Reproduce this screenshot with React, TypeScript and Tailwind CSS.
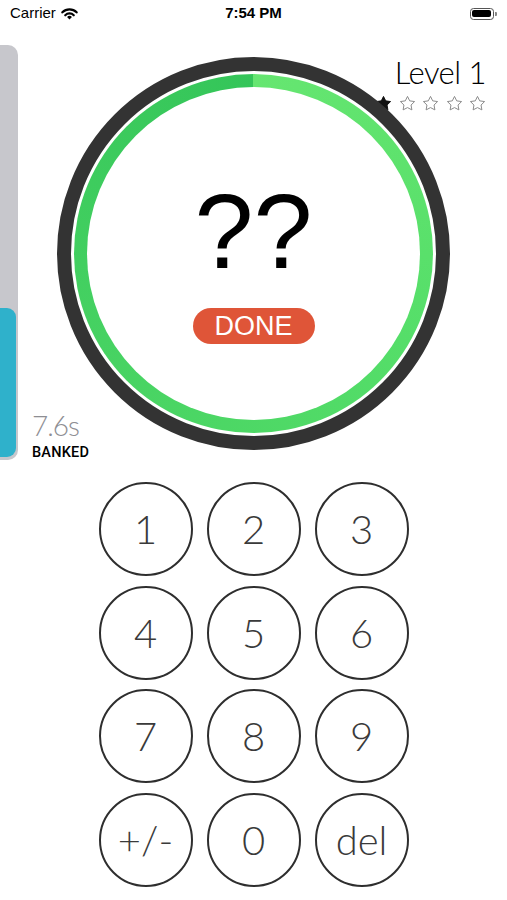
import React from 'react'

const keys = ['1', '2', '3', '4', '5', '6', '7', '8', '9', '+/-', '0', 'del']

function Star({ filled }: { filled?: boolean }) {
  return (
    <svg width="17" height="17" viewBox="0 0 24 24">
      <polygon
        points="12,2 15.09,8.26 22,9.27 17,14.14 18.18,21.02 12,17.77 5.82,21.02 7,14.14 2,9.27 8.91,8.26"
        fill={filled ? '#111' : '#fff'}
        stroke={filled ? '#111' : '#8a8a8a'}
        strokeWidth="1.4"
        strokeLinejoin="round"
      />
    </svg>
  )
}

function Wifi() {
  return (
    <svg width="17" height="13" viewBox="0 0 16 12">
      <path d="M1.3 4.9 A9.4 9.4 0 0 1 14.7 4.9" fill="none" stroke="#000" strokeWidth="2.1" strokeLinecap="round" />
      <path d="M4 7.6 A5.6 5.6 0 0 1 12 7.6" fill="none" stroke="#000" strokeWidth="2.1" strokeLinecap="round" />
      <path d="M8 11.6 L5.7 9.3 A3.2 3.2 0 0 1 10.3 9.3 Z" fill="#000" />
    </svg>
  )
}

export default function App() {
  return (
    <div className="w-[507px] h-[900px] bg-white overflow-hidden font-['Liberation_Sans',sans-serif] text-black">
      {/* status bar */}
      <div className="grid grid-cols-3 h-[27px] items-center px-[10px] text-[15px]">
        <div className="flex items-center gap-[5px]">
          <span>Carrier</span>
          <Wifi />
        </div>
        <div className="text-center font-bold">7:54 PM</div>
        <div className="flex justify-end items-center">
          <div className="w-[24px] h-[12px] rounded-[3.5px] border border-[#555] p-[1.5px]">
            <div className="w-full h-full rounded-[2px] bg-black" />
          </div>
          <div className="w-[2px] h-[4px] rounded-r-[1px] bg-[#888] ml-[1px]" />
        </div>
      </div>

      {/* game area */}
      <div className="relative flex items-start h-[455px]">
        <div className="mt-[18px] w-[18px] h-[415px] rounded-r-[10px] bg-[#c7c7cc] flex flex-col justify-end pr-[2px] pb-[3px]">
          <div className="h-[149px] rounded-r-[9px] bg-[#2fb1cb]" />
        </div>

        {/* level + stars */}
        <div className="absolute right-[21px] top-[30px] flex flex-col items-end">
          <span className="font-['Lato',sans-serif] font-light text-[31px] leading-none tracking-[-0.5px]">Level 1</span>
          <div className="flex gap-[6.5px] mt-[7px]">
            <Star filled />
            <Star />
            <Star />
            <Star />
            <Star />
          </div>
        </div>

        {/* timer ring */}
        <div className="relative z-10 ml-[39px] mt-[30px] w-[393px] h-[393px] rounded-full border-[14px] border-[#333] bg-white p-[3px]">
          <div className="w-full h-full rounded-full bg-[conic-gradient(#66e671,#55de69,#46d262,#34c559)] p-[13px]">
            <div className="w-full h-full rounded-full bg-white flex flex-col items-center pt-[91px]">
              <span className="text-[106px] leading-none">??</span>
              <div className="mt-[24px] w-[122px] h-[36px] rounded-full bg-[#df5538] flex items-center justify-center text-white text-[27px] leading-none">
                DONE
              </div>
            </div>
          </div>
        </div>

        {/* banked time */}
        <div className="absolute left-[32px] top-[384px] flex flex-col">
          <span className="font-['Lato',sans-serif] font-light text-[28px] leading-none text-[#8e8e93] tracking-[-1px]">7.6s</span>
          <span className="font-['Roboto',sans-serif] font-medium text-[14.5px] leading-none mt-[7px] tracking-[0.2px]">BANKED</span>
        </div>
      </div>

      {/* keypad */}
      <div className="grid grid-cols-[repeat(3,94px)] gap-x-[14px] gap-y-[9.5px] justify-center">
        {keys.map((k) => (
          <button
            key={k}
            className="w-[94px] h-[94px] rounded-full border-2 border-[#2e2e2e] flex items-center justify-center font-['Lato',sans-serif] font-light text-[40px] leading-none text-[#3a3a3a]"
          >
            {k}
          </button>
        ))}
      </div>
    </div>
  )
}
